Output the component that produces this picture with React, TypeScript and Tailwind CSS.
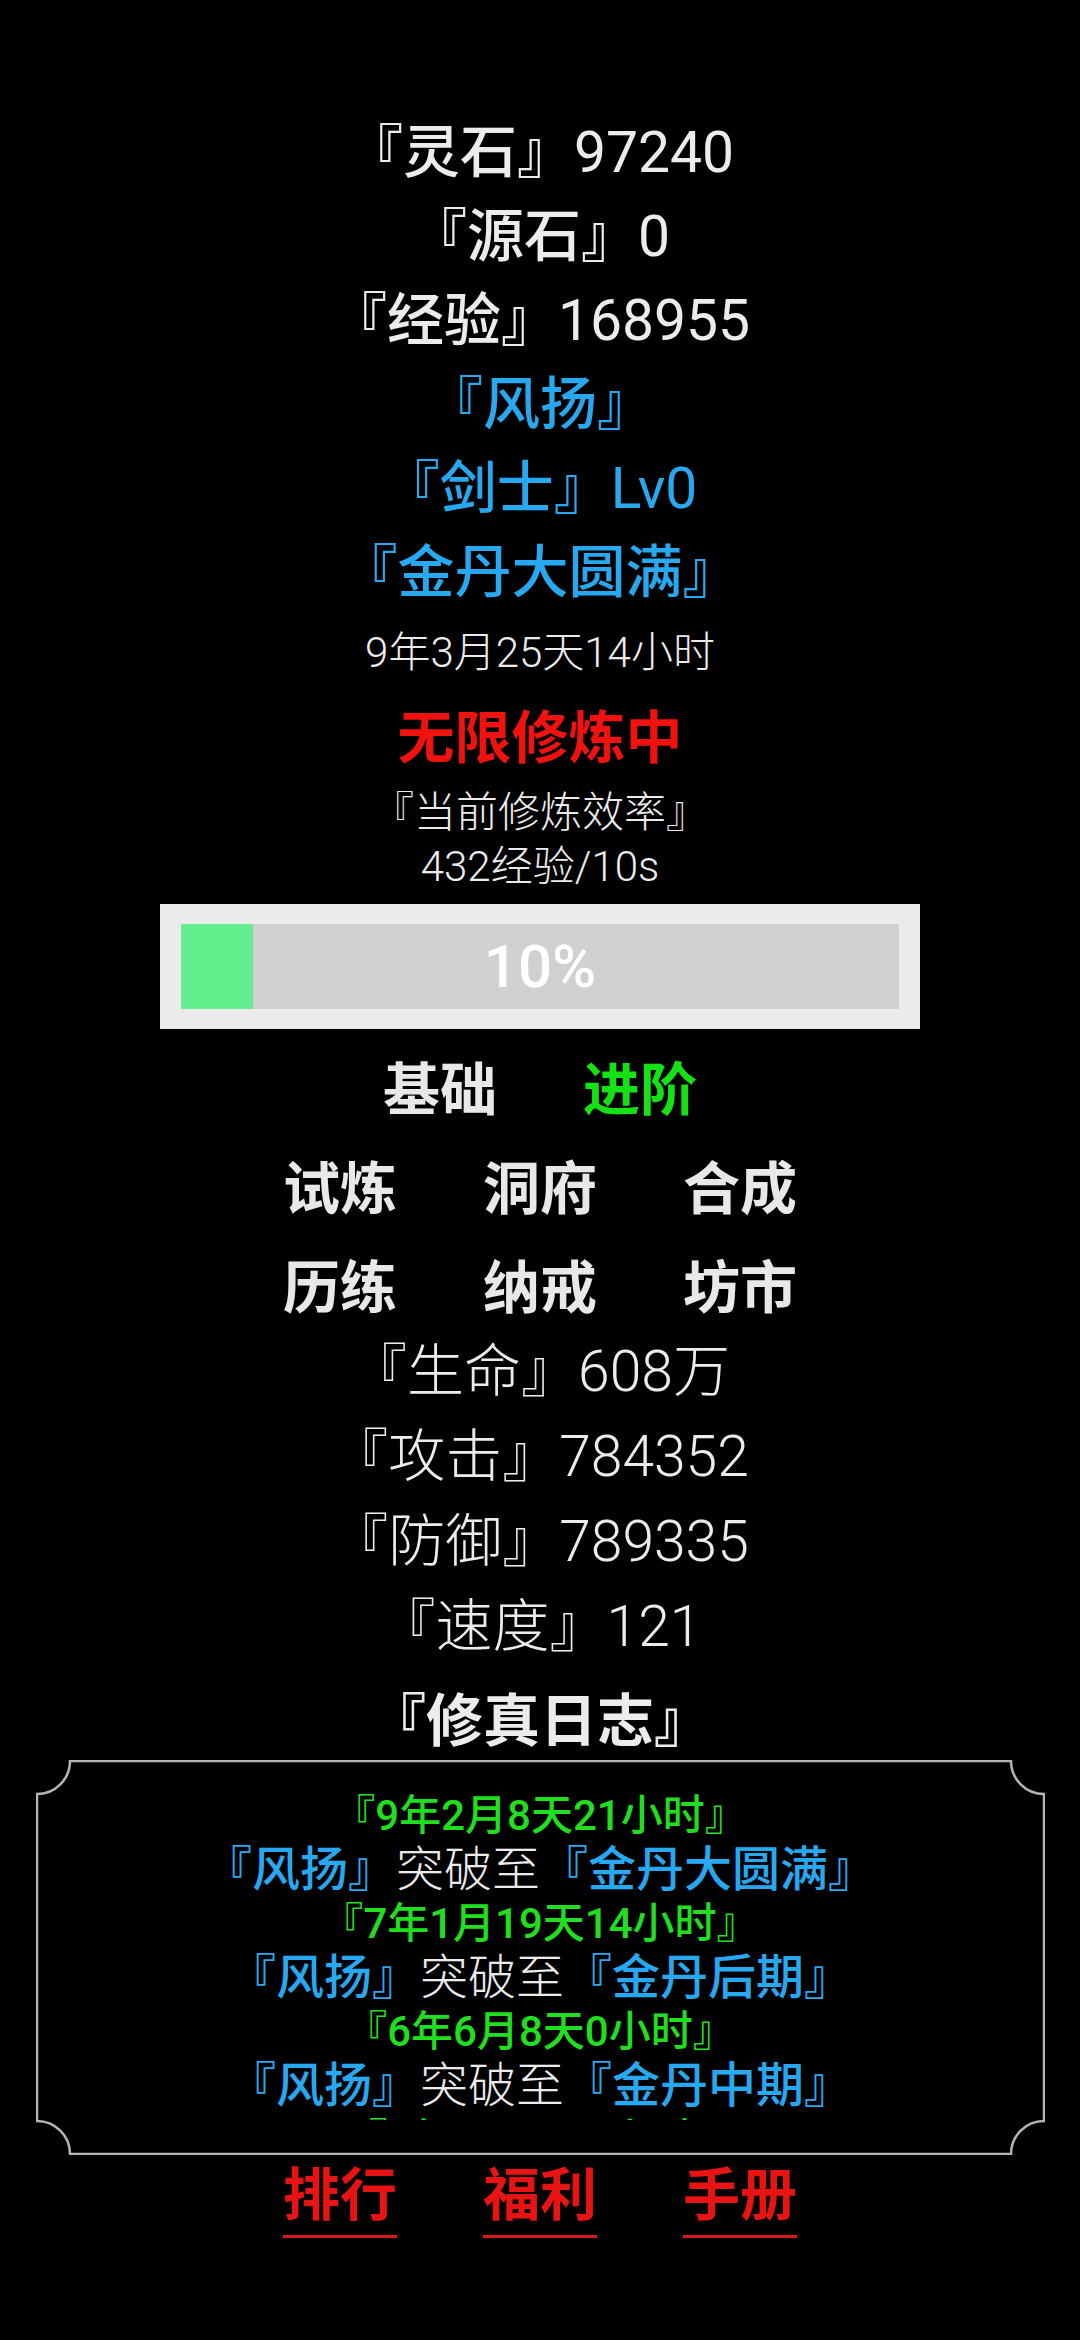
import React from "react";

const topStats = [
  { label: "灵石", value: "97240" },
  { label: "源石", value: "0" },
  { label: "经验", value: "168955" },
];

const attrs = [
  { label: "生命", value: "608万" },
  { label: "攻击", value: "784352" },
  { label: "防御", value: "789335" },
  { label: "速度", value: "121" },
];

const logs = [
  { time: "9年2月8天21小时", realm: "金丹大圆满" },
  { time: "7年1月19天14小时", realm: "金丹后期" },
  { time: "6年6月8天0小时", realm: "金丹中期" },
  { time: "5年2月3天7小时", realm: "金丹初期" },
];

function LogFrame() {
  const w = 1009;
  const h = 395;
  const r = 34;
  const d = `M ${r} 1 H ${w - r} A ${r - 1} ${r - 1} 0 0 0 ${w - 1} ${r} V ${h - r} A ${r - 1} ${r - 1} 0 0 0 ${w - r} ${h - 1} H ${r} A ${r - 1} ${r - 1} 0 0 0 1 ${h - r} V ${r} A ${r - 1} ${r - 1} 0 0 0 ${r} 1 Z`;
  return (
    <svg className="absolute inset-0" width={w} height={h} viewBox={`0 0 ${w} ${h}`}>
      <path d={d} fill="none" stroke="#b5b5b5" strokeWidth="2.5" />
    </svg>
  );
}

export default function App() {
  return (
    <div className="min-h-[2340px] w-full bg-black text-[#ececec] flex flex-col items-center pt-[111px] [font-family:Roboto,'Noto_Sans_CJK_SC',sans-serif]">
      {topStats.map((s) => (
        <div key={s.label} className="text-[57px] leading-[84px] whitespace-nowrap">
          <span className="font-medium">『{s.label}』</span>
          {s.value}
        </div>
      ))}
      <div className="text-[57px] leading-[84px] text-[#27a9f1]">
        <span className="font-medium">『风扬』</span>
      </div>
      <div className="text-[57px] leading-[84px] text-[#27a9f1]">
        <span className="font-medium">『剑士』</span>Lv0
      </div>
      <div className="text-[57px] leading-[84px] text-[#27a9f1]">
        <span className="font-medium">『金丹大圆满』</span>
      </div>

      <div className="mt-[11px] text-[42px] leading-[54px] font-light">9年3月25天14小时</div>
      <div className="mt-[17px] text-[57px] leading-[84px] font-bold text-[#f0120f]">无限修炼中</div>
      <div className="mt-[5px] text-[42px] leading-[54px] font-light">『当前修炼效率』</div>
      <div className="text-[42px] leading-[54px] font-light">432经验/10s</div>

      {/* progress */}
      <div className="mt-[10px] w-[760px] h-[125px] bg-[#ebebeb] px-[21px] py-[20px]">
        <div className="relative h-full w-full bg-[#d0d0d0] flex">
          <div className="h-full bg-[#64ef8e]" style={{ width: "10%" }} />
          <div className="absolute inset-0 flex items-center justify-center text-[60px] font-medium text-white">
            10%
          </div>
        </div>
      </div>

      {/* tabs */}
      <div className="mt-[12px] flex text-[57px] leading-[99px] font-bold">
        <span className="mx-[43px] text-[#e8e8e8]">基础</span>
        <span className="mx-[43px] text-[#14e214]">进阶</span>
      </div>
      <div className="flex text-[57px] leading-[99px] font-bold text-[#e8e8e8]">
        <span className="mx-[43px]">试炼</span>
        <span className="mx-[43px]">洞府</span>
        <span className="mx-[43px]">合成</span>
      </div>
      <div className="flex text-[57px] leading-[99px] font-bold text-[#e8e8e8]">
        <span className="mx-[43px]">历练</span>
        <span className="mx-[43px]">纳戒</span>
        <span className="mx-[43px]">坊市</span>
      </div>

      <div className="-mt-[9px] flex flex-col items-center">
        {attrs.map((a) => (
          <div key={a.label} className="text-[57px] leading-[85px] font-light whitespace-nowrap">
            『{a.label}』{a.value}
          </div>
        ))}
      </div>

      <div className="mt-[15px] text-[57px] leading-[76px] font-bold">『修真日志』</div>

      {/* log */}
      <div className="relative w-[1009px] h-[395px] pt-[29px]">
        <LogFrame />
        <div className="h-[331px] overflow-hidden flex flex-col items-center">
          {logs.map((l) => (
            <React.Fragment key={l.time}>
              <div className="text-[42px] leading-[54px] font-medium text-[#1fdf1f] whitespace-nowrap">
                『{l.time}』
              </div>
              <div className="text-[48px] leading-[54px] whitespace-nowrap">
                <span className="font-medium text-[#27a9f1]">『风扬』</span>
                <span className="font-light text-[#ececec]">突破至</span>
                <span className="font-medium text-[#27a9f1]">『{l.realm}』</span>
              </div>
            </React.Fragment>
          ))}
        </div>
      </div>

      {/* bottom links */}
      <div className="mt-[2px] flex text-[57px] leading-[78px] font-bold text-[#e81414]">
        <span className="mx-[43px] border-b-[3px] border-[#d91a1a]">排行</span>
        <span className="mx-[43px] border-b-[3px] border-[#d91a1a]">福利</span>
        <span className="mx-[43px] border-b-[3px] border-[#d91a1a]">手册</span>
      </div>
    </div>
  );
}
